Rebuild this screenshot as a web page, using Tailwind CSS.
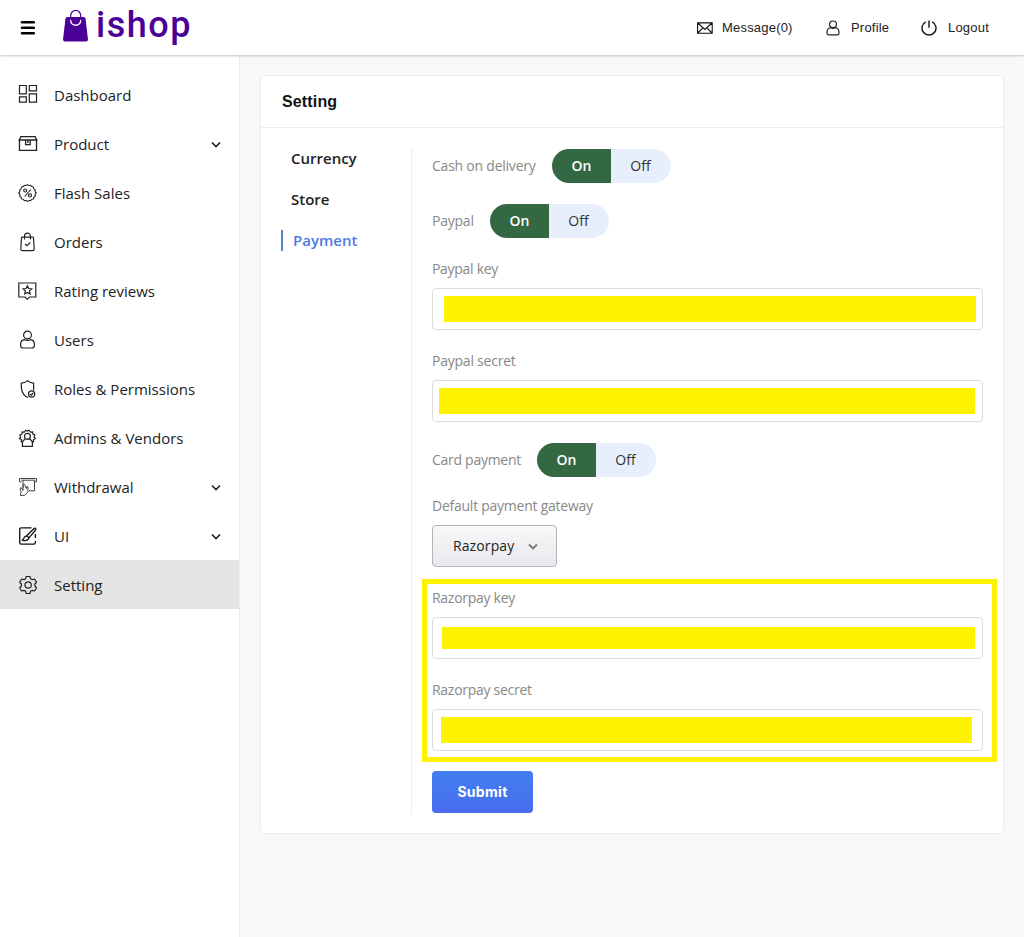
<!DOCTYPE html>
<html lang="en">
<head>
<meta charset="utf-8">
<title>ishop - Setting</title>
<script src="https://cdn.jsdelivr.net/npm/@tailwindcss/browser@4"></script>
</head>
<body class="h-[937px] overflow-hidden bg-[#f8f8f8] font-['Open_Sans',sans-serif] text-[#222]">
<header class="relative z-10 flex h-[55px] items-center justify-between bg-white pl-[20px] pr-[35px] shadow-[0_1px_2px_rgba(0,0,0,0.22)]">
  <div class="flex items-center">
    <svg class="h-[14px] w-[15px]" viewBox="0 0 15 14" fill="none" stroke="#000" stroke-width="2.6" stroke-linecap="round"><path d="M2 1.3h11.800M2 6.800h11.800M2 12.2h11.800"/></svg>
    <svg class="-mt-[4px] ml-[28px] h-[32px] w-[25px]" viewBox="0 0 25 32"><path d="M2.5 8.5Q2.8 7 4.5 7h16q1.700 0 2 1.500L25 29.500Q25 31.500 23 31.500H2Q0 31.500 0 29.500Z" fill="#4b0096"/><path d="M7.700 8V5.500a5 5 0 0 1 10 0V8" fill="none" stroke="#4b0096" stroke-width="1.200"/><path d="M7.700 10.500c0 6.300 10 6.300 10 0" fill="none" stroke="#fff" stroke-width="1.400" stroke-linecap="round"/></svg>
    <span class="-mt-[5px] ml-[8px] font-['Roboto',sans-serif] text-[36px] font-medium leading-[48px] tracking-[1.5px] text-[#4b0096]">ishop</span>
  </div>
  <nav class="flex items-center font-['Liberation_Sans',sans-serif] text-[13px] tracking-[0.2px]">
    <svg class="h-[12px] w-[16px]" viewBox="0 0 16 12" fill="none" stroke="#111" stroke-width="1.100"><path d="M.6.9h14.600v10.400H.6zM.8 1l7.100 6.400L15 1M.8 11l5-5.200M15 11l-5-5.200"/></svg>
    <span class="ml-[9px] w-[71px]">Message(0)</span>
    <svg class="ml-[33px] h-[16px] w-[14px]" viewBox="0 0 14 17" preserveAspectRatio="none" fill="none" stroke="#222" stroke-width="1.200"><circle cx="7" cy="4.500" r="3.500"/><path d="M4.300 8.200C2 8.700 1 10.500 1 13v1.200Q1 15.800 2.600 15.800h8.800Q13 15.800 13 14.200V13c0-2.500-1-4.300-3.300-4.800-1.600.9-3.800.9-5.400 0z"/></svg>
    <span class="ml-[11px] w-[38px]">Profile</span>
    <svg class="ml-[32px] h-[16px] w-[16px]" viewBox="0 0 16 16" fill="none" stroke="#111" stroke-width="1.400"><path d="M8 .5v7.200M4.700 1.900a7 7 0 1 0 6.600 0"/></svg>
    <span class="ml-[11px] w-[41px]">Logout</span>
  </nav>
</header>
<div class="flex h-[882px]">
  <aside class="w-[240px] shrink-0 border-r border-[#ececec] bg-white pt-[15px] text-[15px] [&_a]:pt-px">
    <a class="flex h-[49px] items-center pl-[18px]"><svg class="-mt-[3px] h-5 w-5" viewBox="0 0 20 20" fill="none" stroke="#222" stroke-width="1.200"><path d="M1.500 1.500h6.800v8.300H1.500zM11.300 1.500h7.200v5.300h-7.200zM1.500 12.800h6.800v5.400H1.500zM11.300 9.800h7.200v8.400h-7.200z"/></svg><span class="ml-4">Dashboard</span></a>
    <a class="flex h-[49px] items-center pl-[18px] pr-[18px]"><svg class="-mt-[3px] h-5 w-5" viewBox="0 0 20 20" fill="none" stroke="#222" stroke-width="1.300"><path d="M1.500 7v10.300h17V7M1.200 7h17.600L17.200 3.600H2.800zM7.600 7v4.600h4.600V7M9.900 7v3"/></svg><span class="ml-4">Product</span><svg class="ml-auto h-[7px] w-[10px]" viewBox="0 0 10 7" fill="none" stroke="#222" stroke-width="1.600"><path d="M1 1.500l4 4 4-4"/></svg></a>
    <a class="flex h-[49px] items-center pl-[18px]"><svg class="h-5 w-5" viewBox="0 0 20 20" fill="none" stroke="#222" stroke-width="1.100" stroke-linejoin="round"><path d="M9.500 1.500q1.300 1.500 3.100.7.800 1.800 2.700 1.800.1 2 1.900 2.800-.6 1.900 1.100 3.200-1.700 1.300-1.100 3.200-1.800.8-1.900 2.800-1.900 0-2.700 1.800-1.800-.8-3.100.7-1.300-1.500-3.100-.7-.8-1.800-2.700-1.800-.1-2-1.900-2.800.6-1.900-1.100-3.200 1.700-1.300 1.100-3.200 1.800-.8 1.900-2.800 1.900 0 2.700-1.800 1.800.8 3.100-.7z"/><circle cx="7.200" cy="7.500" r="1.500"/><circle cx="12" cy="12.400" r="1.500"/><path d="M12.700 6.500l-6 7"/></svg><span class="ml-4">Flash Sales</span></a>
    <a class="flex h-[49px] items-center pl-[18px]"><svg class="h-5 w-5" viewBox="0 0 20 20" fill="none" stroke="#222" stroke-width="1.200" stroke-linejoin="round"><path d="M4.200 5.200h10.600q.6 0 .7.800l.7 10.800q0 1.900-1.700 1.900h-10q-1.700 0-1.700-1.900L3.500 6q0-.8.7-.8zM6.500 7.500V4.200a3 3 0 0 1 6 0v3.300M7 12l2 1.700 3.200-3.200"/></svg><span class="ml-4">Orders</span></a>
    <a class="flex h-[49px] items-center pl-[18px]"><svg class="h-5 w-5" viewBox="0 0 20 20" fill="none" stroke="#222" stroke-width="1.200"><path d="M.8 2h17v14h-6.200l-2.300 2.200L7 16H.8z"/><path d="M9.400 4.700l1.300 2.800 3 .4-2.200 2 .6 3-2.700-1.500-2.600 1.500.5-3-2.200-2 3-.4z"/></svg><span class="ml-4">Rating reviews</span></a>
    <a class="flex h-[49px] items-center pl-[18px]"><svg class="h-5 w-5" viewBox="0 0 20 20" fill="none" stroke="#222" stroke-width="1.200"><circle cx="9.500" cy="5" r="3.900"/><path d="M6.500 9.700C4 10 2.600 11.900 2.600 14.500v1q0 2.500 2.500 2.500h8.800q2.500 0 2.500-2.500v-1c0-2.600-1.400-4.500-3.900-4.800-2 .9-4 .9-6 0z"/></svg><span class="ml-4">Users</span></a>
    <a class="flex h-[49px] items-center pl-[18px]"><svg class="h-5 w-5" viewBox="0 0 20 20" fill="none" stroke="#222" stroke-width="1.200"><path d="M15.600 11.500V4.200Q12 4 9.600 1.600 7 4 3.300 4.200q-.6 9.500 4.400 13 1.300.9 2.500 1.100"/><circle cx="13.600" cy="15" r="3.100"/><path d="M12 15l1.200 1.200 2-2.200"/></svg><span class="ml-4">Roles &amp; Permissions</span></a>
    <a class="flex h-[49px] items-center pl-[18px]"><svg class="h-5 w-5" viewBox="0 0 20 20" fill="none" stroke="#222" stroke-width="1.200"><path d="M5.200 14.200l-2-.4.2-2-1.900-1.200L2.700 8.900 1.900 7l2-1 .3-2.200 2.200.2L7.800 2.200l1.600.9 1.700-.9L12.400 4l2.200-.2.300 2.200 2 1-.8 1.900 1.200 1.700-1.900 1.200.2 2-2 .4"/><circle cx="9.400" cy="8.300" r="3"/><path d="M7.300 10.700l-2.900 2.800v4.800h10v-4.800l-2.900-2.800"/></svg><span class="ml-4">Admins &amp; Vendors</span></a>
    <a class="flex h-[49px] items-center pl-[18px] pr-[18px]"><svg class="h-5 w-5" viewBox="0 0 20 20" fill="none" stroke="#444" stroke-width="1"><path d="M3.500 4.800h-2V1.500h17v3.300h-2M3.500 3.200h13v10.600h-5.500M5 3.300v7.400M5 13.500L3.200 10.700q-1.400.1-1.100 1.500l1 2.600-.7 3.600h4.200l3.300-3.600v-5q-.9-1-1.500.2v1.500L6.600 7.300q-1.400-.6-1.500.5z"/></svg><span class="ml-4">Withdrawal</span><svg class="ml-auto h-[7px] w-[10px]" viewBox="0 0 10 7" fill="none" stroke="#222" stroke-width="1.600"><path d="M1 1.500l4 4 4-4"/></svg></a>
    <a class="flex h-[49px] items-center pl-[18px] pr-[18px]"><svg class="h-5 w-5" viewBox="0 0 20 20" fill="none" stroke="#111" stroke-width="1.300"><path d="M13.500 1.800H3.300q-1.600 0-1.600 1.600v13.200q0 1.600 1.600 1.600h12.500q1.600 0 1.600-1.600V15M17.400 12V8"/><path d="M8.300 10.200L16 2.600q1.500-1 1.800.1.200.8-.6 1.800l-6.500 7.700M4.500 14.200c1.500-1 1.400-3.600 3.400-4 1.800-.3 3.300 1.300 2.600 2.700-.8 1.500-3.500 2.300-6 1.300z"/></svg><span class="ml-4">UI</span><svg class="ml-auto h-[7px] w-[10px]" viewBox="0 0 10 7" fill="none" stroke="#222" stroke-width="1.600"><path d="M1 1.500l4 4 4-4"/></svg></a>
    <a class="flex h-[49px] items-center bg-[#e4e4e4] pl-[18px]"><svg class="h-5 w-5" viewBox="0 0 20 20" fill="none" stroke="#222" stroke-width="1.200" stroke-linejoin="round"><path d="M8.200 1.500h3.800l.6 2.300 1.600.9 2.400-.7 1.900 3.300-1.700 1.700v2l1.700 1.700-1.900 3.300-2.400-.7-1.600.9-.6 2.300H8.200l-.6-2.300-1.600-.9-2.400.7-1.900-3.300L3.400 11V9L1.700 7.300 3.600 4l2.400.7 1.600-.9z"/><circle cx="10.100" cy="10" r="3.200"/></svg><span class="ml-4">Setting</span></a>
  </aside>
  <main class="flex-1 pl-[20px] pr-[20px] pt-[20px]">
    <section class="h-[759px] rounded-[5px] border border-[#ededed] bg-white">
      <h1 class="flex h-[52px] items-center border-b border-[#ececec] pl-[21px] font-['Liberation_Sans',sans-serif] text-[16px] font-bold tracking-[0.15px] text-[#111]">Setting</h1>
      <div class="flex pt-[20px]">
        <div class="h-[666px] w-[151px] shrink-0 border-r border-[#ececec] pl-[20px] text-[15px] font-semibold">
          <div class="flex h-[22px] items-center pb-[2px] pl-[10px]">Currency</div>
          <div class="mt-[19px] flex h-[22px] items-center pb-[2px] pl-[10px]">Store</div>
          <div class="mt-[19px] flex h-[21px] items-center border-l-2 border-[#5585c5] pl-[10px] text-[#4c7ae6]">Payment</div>
        </div>
        <form class="ml-[20px] w-[551px] text-[14px] tracking-[-0.23px] text-[#888]">
          <div class="flex h-[35px] items-center"><span class="w-[104px] whitespace-nowrap">Cash on delivery</span><div class="ml-4 flex h-[34px] overflow-hidden rounded-full font-semibold tracking-normal"><span class="flex w-[59px] items-center justify-center bg-[#336843] text-white">On</span><span class="flex w-[60px] items-center justify-center bg-[#e7effd] pr-px font-medium text-[#333]">Off</span></div></div>
          <div class="mt-5 flex h-[35px] items-center"><span class="w-[42px]">Paypal</span><div class="ml-4 flex h-[34px] overflow-hidden rounded-full font-semibold tracking-normal"><span class="flex w-[59px] items-center justify-center bg-[#336843] text-white">On</span><span class="flex w-[60px] items-center justify-center bg-[#e7effd] pr-px font-medium text-[#333]">Off</span></div></div>
          <div class="mt-5 h-[22px] leading-[22px] tracking-[-0.3px]">Paypal key</div>
          <div class="mt-2 h-[42px] rounded-[4px] border border-[#dcdcdc] pl-[11px] pt-[7px]"><div class="h-[26px] w-[532px] bg-[#fff200]"></div></div>
          <div class="mt-5 h-[22px] leading-[22px]">Paypal secret</div>
          <div class="mt-2 h-[42px] rounded-[4px] border border-[#dcdcdc] pl-[6px] pt-[7px]"><div class="h-[26px] w-[536px] bg-[#fff200]"></div></div>
          <div class="mt-5 flex h-[35px] items-center"><span class="w-[89px] whitespace-nowrap tracking-[-0.28px]">Card payment</span><div class="ml-4 flex h-[34px] overflow-hidden rounded-full font-semibold tracking-normal"><span class="flex w-[59px] items-center justify-center bg-[#336843] text-white">On</span><span class="flex w-[60px] items-center justify-center bg-[#e7effd] pr-px font-medium text-[#333]">Off</span></div></div>
          <div class="mt-[18px] h-[22px] leading-[22px] tracking-[-0.25px]">Default payment gateway</div>
          <div class="mt-2 flex h-[42px] w-[125px] items-center rounded-[4px] border border-[#b4b4b8] bg-linear-to-b from-[#f8f8fa] to-[#e8e8ec] pl-[20px] tracking-[0.1px] text-[#222]"><span class="-mt-[2px] w-[62px]">Razorpay</span><svg class="ml-[13px] h-[7px] w-[10px]" viewBox="0 0 10 7" fill="none" stroke="#777" stroke-width="1.800"><path d="M1 1.500l4 4 4-4"/></svg></div>
          <div class="-ml-[10px] mt-[12px] h-[183px] w-[575px] border-[5px] border-[#fff200] pl-[5px] pr-[9px] pt-[3px]">
            <div class="h-[22px] leading-[22px] tracking-[-0.28px]">Razorpay key</div>
            <div class="mt-2 h-[42px] rounded-[4px] border border-[#dcdcdc] pl-[9px] pt-[9px]"><div class="h-[22px] w-[533px] bg-[#fff200]"></div></div>
            <div class="mt-5 h-[22px] leading-[22px] tracking-[-0.28px]">Razorpay secret</div>
            <div class="mt-2 h-[42px] rounded-[4px] border border-[#dcdcdc] pl-[8px] pt-[7px]"><div class="h-[26px] w-[531px] bg-[#fff200]"></div></div>
          </div>
          <button type="button" class="mt-[9px] h-[42px] w-[101px] rounded-[4px] bg-linear-to-b from-[#417ff3] to-[#496cec] pb-[2px] font-['Inter',sans-serif] text-[14px] font-bold tracking-[0.3px] text-white">Submit</button>
        </form>
      </div>
    </section>
  </main>
</div>
</body>
</html>
